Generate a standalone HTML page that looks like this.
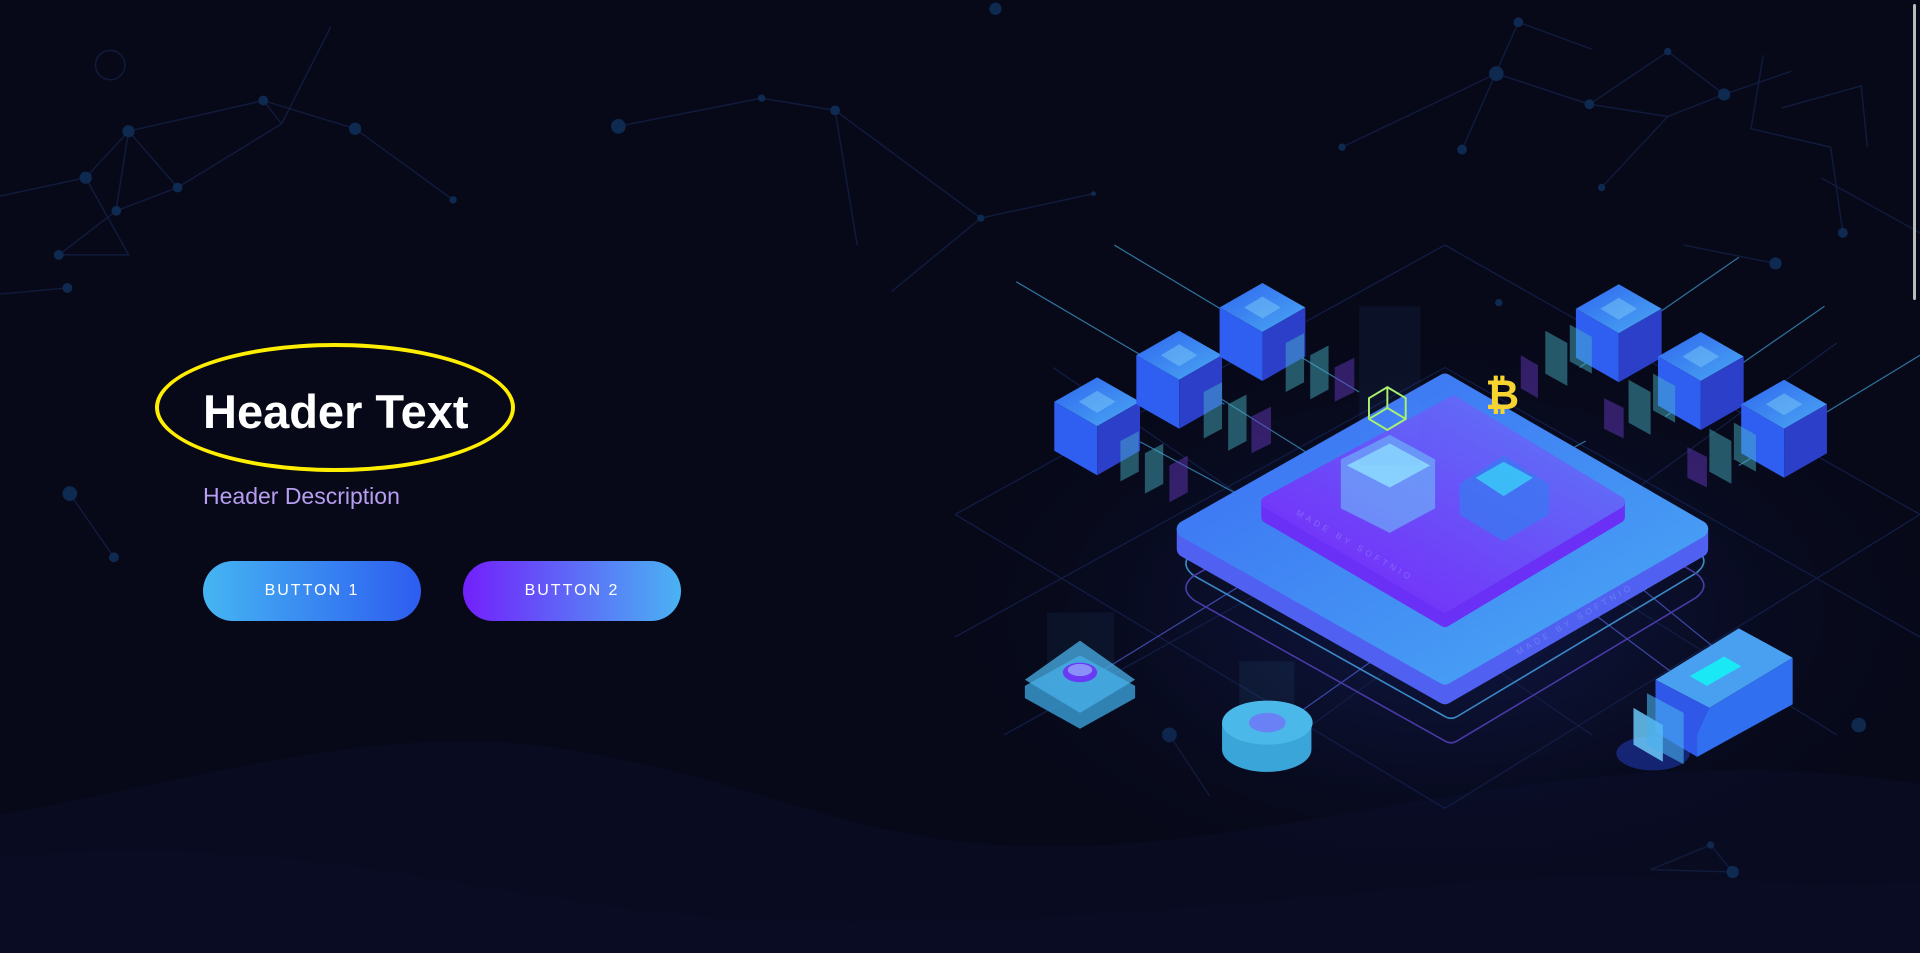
<!DOCTYPE html>
<html><head><meta charset="utf-8"><style>
html,body{margin:0;padding:0;width:1920px;height:953px;overflow:hidden;background:#070919;font-family:"Liberation Sans",sans-serif}
.wrap{position:relative;width:1920px;height:953px}
svg{position:absolute;left:0;top:0}
h1{position:absolute;left:203px;top:382px;margin:0;font-size:47px;font-weight:bold;color:#fff;line-height:60px}
.ell{position:absolute;left:155px;top:343px;width:352px;height:121px;border:4px solid #ffee00;border-radius:50%}
p{position:absolute;left:203px;top:483px;margin:0;font-size:23px;color:#b79ef0}
.btn{position:absolute;top:561px;height:60px;width:218px;border-radius:30px;color:#fff;font-size:16px;letter-spacing:2px;text-align:center;line-height:60px}
.b1{left:203px;background:linear-gradient(90deg,#45b5f2,#2d5cf0)}
.b2{left:463px;background:linear-gradient(90deg,#7220fb,#4ab3f3)}
.sb{position:absolute;right:4px;top:4px;width:3px;height:296px;background:#bbb;border-radius:2px}
</style></head><body><div class="wrap">
<svg width="1920" height="953" viewBox="0 0 1568 778">
<defs>
<linearGradient id="pt" x1="0" y1="0" x2="1" y2="1"><stop offset="0" stop-color="#3a6cf5"/><stop offset="1" stop-color="#4aaaf3"/></linearGradient>
<linearGradient id="pi" x1="0" y1="1" x2="1" y2="0"><stop offset="0" stop-color="#7a22fa"/><stop offset="1" stop-color="#5a7df6"/></linearGradient>
<linearGradient id="ct" x1="0" y1="0" x2="1" y2="1"><stop offset="0" stop-color="#2f66f0"/><stop offset="1" stop-color="#4aa8f2"/></linearGradient>
<radialGradient id="glow" cx="0.5" cy="0.5" r="0.5"><stop offset="0" stop-color="#1a2a80" stop-opacity="0.5"/><stop offset="1" stop-color="#070919" stop-opacity="0"/></radialGradient>
</defs>
<path d="M0 665 C150 640 300 590 450 610 C650 640 700 700 900 690 C1100 680 1300 600 1568 640 L1568 778 L0 778Z" fill="#090b21"/>
<path d="M0 700 C200 680 350 720 500 740 C700 770 1000 740 1200 720 C1350 705 1450 730 1568 720 L1568 778 L0 778Z" fill="#0a0c24"/>
<g stroke="#111b3c" stroke-width="1.2" fill="none">
<path d="M0 160 L70 145 L105 107 L215 82 L290 105 L370 163 M105 107 L145 153 L230 101 L270 22 M145 153 L95 172 L48 208 L105 208 L70 145 M0 240 L55 235 M105 107 L95 170 M215 82 L230 101"/>
<path d="M505 103 L622 80 L682 90 L801 178 L893 158 M801 178 L728 238 M682 90 L700 200"/>
<path d="M1096 120 L1222 60 L1298 85 L1362 42 L1408 77 L1463 58 M1298 85 L1362 95 L1308 153 M1362 95 L1408 77 M1194 122 L1240 18 L1300 40 M1440 45 L1430 105 L1495 120 L1505 190 M1487 145 L1568 190 M1375 200 L1450 215 M1455 88 L1520 70 L1525 120"/>
<path d="M57 403 L93 455 M955 600 L988 650 M1348 710 L1397 690 L1415 712 L1348 710"/>
<circle cx="90" cy="53" r="12"/>
</g>
<g fill="#0f2a50">
<circle cx="505" cy="103" r="6"/><circle cx="622" cy="80" r="3"/><circle cx="682" cy="90" r="4"/><circle cx="801" cy="178" r="3"/><circle cx="893" cy="158" r="2"/><circle cx="813" cy="7" r="5"/>
<circle cx="105" cy="107" r="5"/><circle cx="70" cy="145" r="5"/><circle cx="145" cy="153" r="4"/><circle cx="215" cy="82" r="4"/><circle cx="290" cy="105" r="5"/><circle cx="370" cy="163" r="3"/><circle cx="48" cy="208" r="4"/><circle cx="55" cy="235" r="4"/><circle cx="95" cy="172" r="4"/>
<circle cx="57" cy="403" r="6"/><circle cx="93" cy="455" r="4"/><circle cx="1222" cy="60" r="6"/><circle cx="1096" cy="120" r="3"/><circle cx="1194" cy="122" r="4"/><circle cx="1298" cy="85" r="4"/><circle cx="1408" cy="77" r="5"/><circle cx="1362" cy="42" r="3"/><circle cx="1240" cy="18" r="4"/><circle cx="1308" cy="153" r="3"/><circle cx="1505" cy="190" r="4"/><circle cx="1450" cy="215" r="5"/><circle cx="1224" cy="247" r="3"/>
<circle cx="955" cy="600" r="6"/><circle cx="1518" cy="592" r="6"/><circle cx="1415" cy="712" r="5"/><circle cx="1397" cy="690" r="3"/>
</g>
<ellipse cx="1180" cy="500" rx="420" ry="240" fill="url(#glow)"/>
<g stroke="#121e46" stroke-width="1" fill="none">
<path d="M780 420 L1180 200 L1568 420 M780 520 L1180 300 L1568 520 M820 600 L1180 400 L1500 600 M780 420 L1180 660 L1568 420 M860 300 L1300 600 M1500 280 L1060 600"/>
</g>
<g stroke="#4bb8f0" stroke-width="1" opacity="0.6" fill="none">
<path d="M830 230 L1000 330 M910 200 L1110 320 M1420 210 L1290 300 M1490 250 L1360 340 M1568 290 L1420 380 M915 352 L1060 430 M985 318 L1100 390 M1295 360 L1240 390"/>
</g>
<g stroke="#5b6ef5" stroke-width="1" opacity="0.6" fill="none">
<path d="M880 560 L1010 480 M1035 600 L1120 540 M1340 480 L1420 545 M1300 500 L1380 560"/>
</g>
<path d="M975 450 L1180 335 Q1185 332 1190 335 L1385 448 Q1398 458 1385 468 L1190 585 Q1185 588 1180 585 L975 470 Q962 460 975 450Z" fill="none" stroke="#3a8ac8" stroke-width="1.3"/>
<path d="M975 470 L1180 355 Q1185 352 1190 355 L1385 468 Q1398 478 1385 488 L1190 605 Q1185 608 1180 605 L975 490 Q962 480 975 470Z" fill="none" stroke="#4a3aa8" stroke-width="1.3"/>
<path d="M968 432 L968 448 L1180 568 L1388 448 L1388 432Z" fill="#5060f0" stroke="#5060f0" stroke-width="14" stroke-linejoin="round"/>
<path d="M968 432 L1180 312 L1388 432 L1180 552Z" fill="url(#pt)" stroke="url(#pt)" stroke-width="14" stroke-linejoin="round"/>
<path d="M1035 410 L1035 422 L1180 507 L1322 422 L1322 410Z" fill="#6a30f5" stroke="#6a30f5" stroke-width="10" stroke-linejoin="round"/>
<path d="M1035 410 L1187 328 L1322 410 L1180 495Z" fill="url(#pi)" stroke="url(#pi)" stroke-width="10" stroke-linejoin="round"/>
<path d="M1095 375 L1135 355 L1172 375 L1172 415 L1135 435 L1095 415Z" fill="#6fc8f8" opacity="0.55"/>
<path d="M1100 380 L1135 362 L1168 380 L1135 398Z" fill="#8ee0ff" opacity="0.8"/>
<path d="M1192 395 L1228 372 L1265 395 L1265 420 L1228 442 L1192 420Z" fill="#3a78f2" opacity="0.75"/>
<path d="M1205 390 L1228 377 L1252 390 L1228 405Z" fill="#3ad0f8" opacity="0.8"/>
<rect x="1110" y="250" width="50" height="130" fill="#5aa0ff" opacity="0.06"/>
<text x="1058" y="420" fill="#8a7af8" font-size="7" letter-spacing="3" transform="rotate(30 1058 420)" opacity="0.7">MADE BY SOFTNIO</text>
<text x="1240" y="535" fill="#7a8af8" font-size="7" letter-spacing="3" transform="rotate(-30 1240 535)" opacity="0.7">MADE BY SOFTNIO</text>
<g>
<g transform="translate(896,328)"><path d="M-35 0 L0 -20 L35 0 L0 20Z" fill="url(#ct)"/><path d="M-35 0 L0 20 L0 60 L-35 40Z" fill="#2f5ff0"/><path d="M35 0 L0 20 L0 60 L35 40Z" fill="#2c3fc8"/><path d="M-15 0 L0 -9 L15 0 L0 9Z" fill="#7ac8f8" opacity="0.5"/></g>
<g transform="translate(963,290)"><path d="M-35 0 L0 -20 L35 0 L0 20Z" fill="url(#ct)"/><path d="M-35 0 L0 20 L0 60 L-35 40Z" fill="#2f5ff0"/><path d="M35 0 L0 20 L0 60 L35 40Z" fill="#2c3fc8"/><path d="M-15 0 L0 -9 L15 0 L0 9Z" fill="#7ac8f8" opacity="0.5"/></g>
<g transform="translate(1031,251)"><path d="M-35 0 L0 -20 L35 0 L0 20Z" fill="url(#ct)"/><path d="M-35 0 L0 20 L0 60 L-35 40Z" fill="#2f5ff0"/><path d="M35 0 L0 20 L0 60 L35 40Z" fill="#2c3fc8"/><path d="M-15 0 L0 -9 L15 0 L0 9Z" fill="#7ac8f8" opacity="0.5"/></g>
<g transform="translate(1322,252)"><path d="M-35 0 L0 -20 L35 0 L0 20Z" fill="url(#ct)"/><path d="M-35 0 L0 20 L0 60 L-35 40Z" fill="#2f5ff0"/><path d="M35 0 L0 20 L0 60 L35 40Z" fill="#2c3fc8"/><path d="M-15 0 L0 -9 L15 0 L0 9Z" fill="#7ac8f8" opacity="0.5"/></g>
<g transform="translate(1389,291)"><path d="M-35 0 L0 -20 L35 0 L0 20Z" fill="url(#ct)"/><path d="M-35 0 L0 20 L0 60 L-35 40Z" fill="#2f5ff0"/><path d="M35 0 L0 20 L0 60 L35 40Z" fill="#2c3fc8"/><path d="M-15 0 L0 -9 L15 0 L0 9Z" fill="#7ac8f8" opacity="0.5"/></g>
<g transform="translate(1457,330)"><path d="M-35 0 L0 -20 L35 0 L0 20Z" fill="url(#ct)"/><path d="M-35 0 L0 20 L0 60 L-35 40Z" fill="#2f5ff0"/><path d="M35 0 L0 20 L0 60 L35 40Z" fill="#2c3fc8"/><path d="M-15 0 L0 -9 L15 0 L0 9Z" fill="#7ac8f8" opacity="0.5"/></g>
</g>
<g opacity="0.45">
<path d="M915 360 L930 352 L930 385 L915 393Z" fill="#4ab8c8"/><path d="M935 370 L950 362 L950 395 L935 403Z" fill="#4ab8c8"/><path d="M955 380 L970 372 L970 402 L955 410Z" fill="#6a3ac8"/>
<path d="M983 320 L998 312 L998 350 L983 358Z" fill="#4ab8c8"/><path d="M1003 330 L1018 322 L1018 360 L1003 368Z" fill="#4ab8c8"/><path d="M1022 340 L1038 332 L1038 362 L1022 370Z" fill="#6a3ac8"/>
<path d="M1050 280 L1065 272 L1065 312 L1050 320Z" fill="#4ab8c8"/><path d="M1070 290 L1085 282 L1085 318 L1070 326Z" fill="#4ab8c8"/><path d="M1090 300 L1106 292 L1106 320 L1090 328Z" fill="#6a3ac8"/>
<path d="M1242 290 L1256 298 L1256 325 L1242 317Z" fill="#6a3ac8"/><path d="M1262 270 L1280 280 L1280 315 L1262 305Z" fill="#4ab8c8"/><path d="M1282 265 L1300 275 L1300 305 L1282 295Z" fill="#4ab8c8"/>
<path d="M1310 325 L1326 333 L1326 358 L1310 350Z" fill="#6a3ac8"/><path d="M1330 310 L1348 320 L1348 355 L1330 345Z" fill="#4ab8c8"/><path d="M1350 305 L1368 315 L1368 345 L1350 335Z" fill="#4ab8c8"/>
<path d="M1378 365 L1394 373 L1394 398 L1378 390Z" fill="#6a3ac8"/><path d="M1396 350 L1414 360 L1414 395 L1396 385Z" fill="#4ab8c8"/><path d="M1416 345 L1434 355 L1434 385 L1416 375Z" fill="#4ab8c8"/>
</g>
<path d="M1133 316 L1148 325 L1148 342 L1133 351 L1118 342 L1118 325Z M1133 316 L1133 333 L1148 342 M1133 333 L1118 342" fill="none" stroke="#a8f070" stroke-width="1.6"/>
<text x="1213" y="334" fill="#f8d430" font-size="34" font-weight="bold" font-family="Liberation Sans">₿</text>
<path d="M837 560 L882 535 L927 560 L927 570 L882 595 L837 570Z" fill="#3aa0d8" opacity="0.8"/>
<path d="M837 555 L882 523 L927 555 L882 582Z" fill="#4ab0e8" opacity="0.75"/>
<rect x="855" y="500" width="55" height="50" fill="#4ab0e8" opacity="0.06"/>
<ellipse cx="882" cy="549" rx="14" ry="8" fill="#6a3af5"/><ellipse cx="882" cy="547" rx="10" ry="5" fill="#8a90f8"/>
<rect x="1012" y="540" width="45" height="45" fill="#4ab0e8" opacity="0.08"/>
<path d="M998 590 L998 612 A36 18 0 0 0 1071 612 L1071 590Z" fill="#3aa5d8"/>
<ellipse cx="1035" cy="590" rx="37" ry="18" fill="#4ab8e8"/>
<ellipse cx="1035" cy="590" rx="15" ry="8" fill="#6a80f5"/>
<ellipse cx="1350" cy="615" rx="30" ry="14" fill="#2b4cf0" opacity="0.4"/>
<path d="M1352 555 L1420 513 L1464 537 L1396 578Z" fill="#4aa0f0"/>
<path d="M1352 555 L1396 578 L1386 618 L1352 598Z" fill="#2f58e8"/>
<path d="M1396 578 L1464 537 L1464 575 L1386 618 L1386 600Z" fill="#3070f0"/>
<path d="M1380 552 L1408 536 L1422 544 L1394 560Z" fill="#1ae8f5"/>
<path d="M1334 578 L1358 592 L1358 622 L1334 608Z" fill="#6ac8f8" opacity="0.85"/>
<path d="M1345 566 L1375 582 L1375 624 L1345 608Z" fill="#4ab0f0" opacity="0.6"/>
</svg>
<div class="ell"></div>
<h1>Header Text</h1>
<p>Header Description</p>
<div class="btn b1">BUTTON 1</div>
<div class="btn b2">BUTTON 2</div>
<div class="sb"></div>
</div></body></html>
